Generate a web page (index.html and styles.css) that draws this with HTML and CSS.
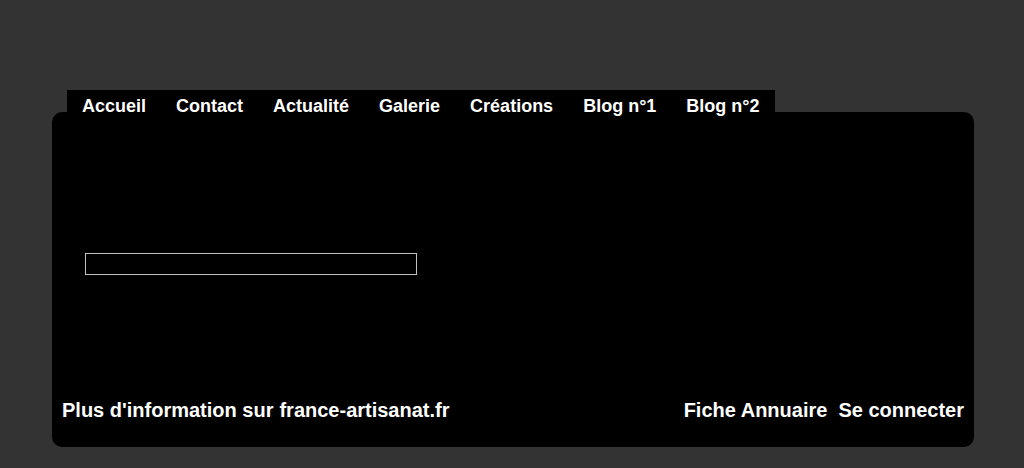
FILE: index.html
```html
<!DOCTYPE html>
<html lang="fr">
<head>
<meta charset="utf-8">
<title>Artisan</title>
<link rel="stylesheet" href="styles.css">
</head>
<body>
<div class="site">
  <nav class="menu">
    <a class="menu-item" href="#">Accueil</a>
    <a class="menu-item" href="#">Contact</a>
    <a class="menu-item" href="#">Actualité</a>
    <a class="menu-item" href="#">Galerie</a>
    <a class="menu-item" href="#">Créations</a>
    <a class="menu-item" href="#">Blog n°1</a>
    <a class="menu-item" href="#">Blog n°2</a>
  </nav>
  <main class="panel">
    <div class="panel-body">
      <input class="field" type="text">
    </div>
    <footer class="panel-foot">
      <div class="foot-left">
        <span>Plus d'information sur</span>
        <a href="#">france-artisanat.fr</a>
      </div>
      <div class="foot-right">
        <a href="#">Fiche Annuaire</a>
        <a href="#">Se connecter</a>
      </div>
    </footer>
  </main>
</div>
</body>
</html>
```
FILE: styles.css
```css
html, body {
  margin: 0;
  padding: 0;
  background: #333333;
  font-family: "Liberation Sans", Arial, sans-serif;
  color: #ffffff;
}
a {
  color: #ffffff;
  text-decoration: none;
}
.site {
  width: 922px;
  margin-left: 52px;
  padding-top: 90px;
}
.menu {
  position: relative;
  z-index: 1;
  display: flex;
  width: fit-content;
  margin-left: 15px;
  background: #000000;
  padding-top: 5px;
  height: 22px;
}
.menu-item {
  padding: 0 15px;
  font-size: 18px;
  font-weight: bold;
  line-height: 22px;
}
.panel {
  display: flex;
  flex-direction: column;
  height: 335px;
  margin-top: -5px;
  background: #000000;
  border-radius: 10px;
  box-sizing: border-box;
}
.panel-body {
  flex: 1;
  padding: 141px 0 0 33px;
}
.field {
  display: block;
  box-sizing: border-box;
  width: 332px;
  height: 22px;
  margin: 0;
  padding: 0;
  background: #000000;
  border: 1px solid #c0c0c0;
  outline: none;
}
.panel-foot {
  display: flex;
  justify-content: space-between;
  padding: 0 10px 25px 10px;
  font-size: 20px;
  font-weight: bold;
  line-height: 23px;
}
.foot-left {
  display: flex;
  gap: 6px;
}
.foot-right {
  display: flex;
  gap: 11px;
}
```
